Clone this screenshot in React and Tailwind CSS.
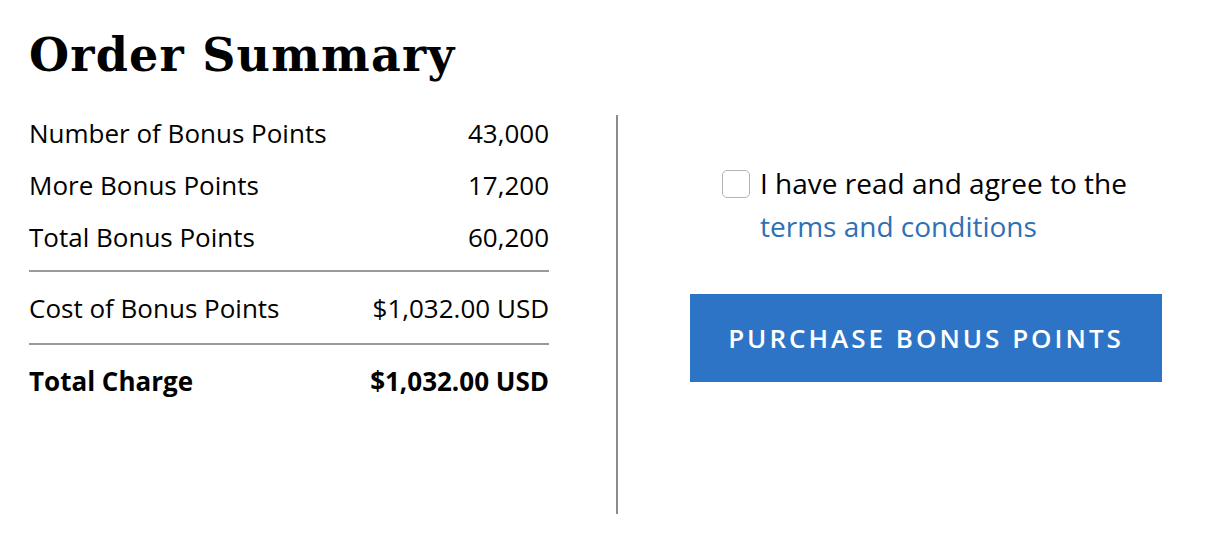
export default function App() {
  const sans = { fontFamily: '"Open Sans", "Noto Sans", sans-serif' };
  return (
    <div className="w-[1214px] h-[538px] bg-white text-black overflow-hidden" style={sans}>
      <div className="pl-[29px] pt-[26px]">
        <h1 className="text-[46px] leading-[58px] font-bold tracking-[1.2px]" style={{ fontFamily: '"DejaVu Serif", "Liberation Serif", serif' }}>
          Order Summary
        </h1>
      </div>
      <div className="flex items-start">
        <div className="ml-[29px] w-[520px] pt-[23px] text-[26px]">
          <div className="flex justify-between items-center h-[52px]"><span>Number of Bonus Points</span><span>43,000</span></div>
          <div className="flex justify-between items-center h-[52px]"><span>More Bonus Points</span><span>17,200</span></div>
          <div className="flex justify-between items-center h-[52px]"><span>Total Bonus Points</span><span>60,200</span></div>
          <div className="mt-[7px] h-[2px] bg-[#9a9a9a]" />
          <div className="mt-[10px] flex justify-between items-center h-[52px]"><span>Cost of Bonus Points</span><span>$1,032.00 USD</span></div>
          <div className="mt-[9px] h-[2px] bg-[#9a9a9a]" />
          <div className="mt-[10px] flex justify-between items-center h-[52px] font-bold"><span>Total Charge</span><span>$1,032.00 USD</span></div>
        </div>
        <div className="ml-[67px] mt-[31px] w-[2px] h-[399px] bg-[#8c8c8c]" />
        <div className="ml-[72px] pt-[86px]">
          <div className="flex items-start ml-[32px]">
            <div className="mt-[0px] w-[28px] h-[28px] rounded-[5px] border border-[#b5b5b5] bg-white shrink-0" />
            <div className="ml-[10px] text-[28px] leading-[43px] -mt-[8px]">
              <div>I have read and agree to the</div>
              <a className="text-[#2f70b5]" href="#">terms and conditions</a>
            </div>
          </div>
          <button className="mt-[46px] w-[472px] h-[88px] bg-[#2e74c6] text-white text-[26px] font-semibold tracking-[3px]">
            PURCHASE BONUS POINTS
          </button>
        </div>
      </div>
    </div>
  );
}
